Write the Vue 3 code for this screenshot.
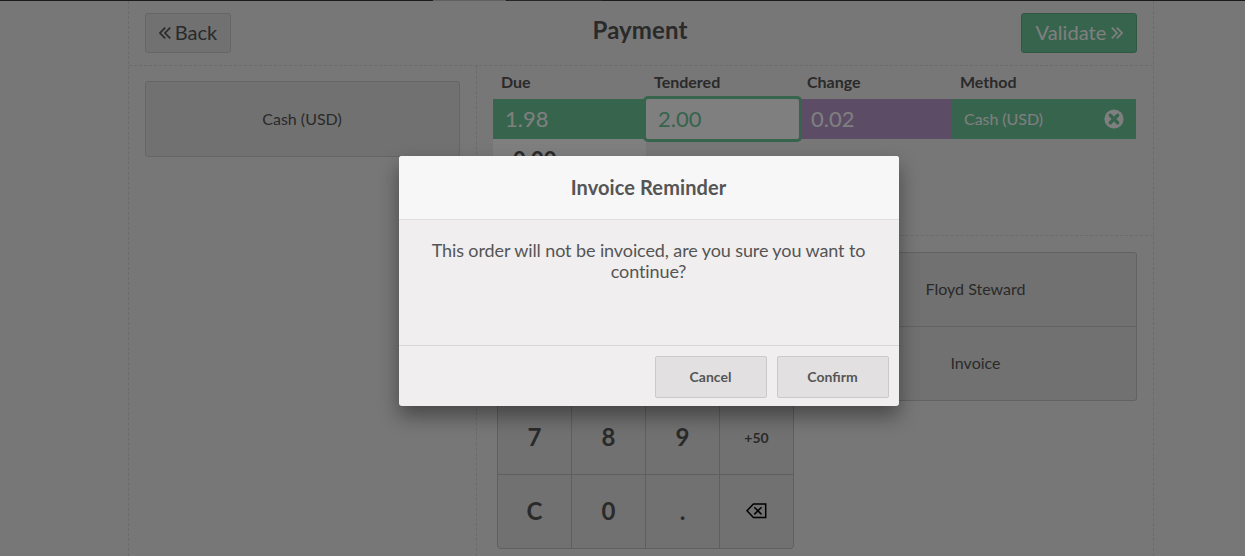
<script setup>
const keys = ['', '', '', '', '', '', '', '', '7', '8', '9', '+50', 'C', '0', '.', 'del']
</script>

<template>
  <div class="pos">
    <div class="topbar"><i class="tab"></i><i class="tab dim"></i></div>
    <div class="screen">
      <header class="head">
        <div class="btn back">
          <svg class="chev" width="12" height="14" viewBox="0 0 12 14"><path d="M6.2 1.6 1 7l5.2 5.4M11.2 1.6 6 7l5.2 5.4" /></svg>
          <span>Back</span>
        </div>
        <h1>Payment</h1>
        <div class="btn validate">
          <span>Validate</span>
          <svg class="chev" width="12" height="14" viewBox="0 0 12 14"><path d="M.8 1.6 6 7 .8 12.4M5.8 1.6 11 7l-5.2 5.4" /></svg>
        </div>
      </header>
      <div class="body">
        <aside class="left"><div class="method">Cash (USD)</div></aside>
        <main class="right">
          <section class="lines">
            <div class="row titles"><span>Due</span><span>Tendered</span><span>Change</span><span>Method</span></div>
            <div class="row line">
              <span class="cell due">1.98</span>
              <span class="cell edit">2.00</span>
              <span class="cell change">0.02</span>
              <span class="cell name">
                <span>Cash (USD)</span>
                <svg width="20" height="20" viewBox="0 0 20 20"><circle cx="10" cy="10" r="9.6" fill="#fff" /><path d="m6.3 6.3 7.4 7.4m0-7.4-7.4 7.4" stroke="#6ec89b" stroke-width="3.4" stroke-linecap="round" /></svg>
              </span>
            </div>
            <div class="row"><span class="due-next">0.00</span></div>
          </section>
          <section class="controls">
            <div class="pad">
              <div v-for="(k, i) in keys" :key="i" class="key" :class="{ mode: k.length > 1 }">
                <svg v-if="k === 'del'" width="21" height="16" viewBox="0 0 21 16"><path d="M7.4 1.1h12.3v13.3H7.4L1 7.75zM8.3 4.2l7.2 7.2m0-7.2-7.2 7.2" fill="none" stroke="#000" stroke-width="1.5" /></svg>
                <template v-else>{{ k }}</template>
              </div>
            </div>
            <div class="options"><div>Floyd Steward</div><div>Invoice</div></div>
          </section>
        </main>
      </div>
    </div>
    <div class="overlay">
      <div class="popup">
        <div class="title">Invoice Reminder</div>
        <p>This order will not be invoiced, are you sure you want to continue?</p>
        <footer><div class="action">Cancel</div><div class="action">Confirm</div></footer>
      </div>
    </div>
  </div>
</template>

<style>
body { overflow: hidden; }
</style>

<style scoped>
* { box-sizing: border-box; }
.pos {
  position: relative;
  width: 1245px;
  height: 556px;
  overflow: hidden;
  background: #f0eeee;
  color: #555;
  font: 16px Lato, "Liberation Sans", sans-serif;
}
.topbar { height: 1px; background: #38343c; display: flex; gap: 2px; padding-left: 433px; }
.tab { width: 73px; background: #c0c0c0; }
.tab.dim { width: 94px; background: #4c4c50; }
.screen {
  margin-left: 128px;
  width: 1026px;
  height: 555px;
  border: dashed #d7d7d7;
  border-width: 0 1px;
  display: flex;
  flex-direction: column;
}
.head {
  height: 65px;
  flex: none;
  border-bottom: 1px dashed #d7d7d7;
  display: grid;
  grid-template-columns: 1fr auto 1fr;
  align-items: start;
  padding: 12px 16px 0;
}
h1 { margin: 2px 0 0; padding-right: 2px; font-size: 24px; line-height: 29px; font-weight: 700; letter-spacing: 0.1px; }
.btn {
  height: 40px;
  display: flex;
  align-items: center;
  justify-content: center;
  font-size: 20px;
  border: 1px solid #cacaca;
  border-radius: 3px;
  background: #e2e2e2;
}
.btn span { padding-bottom: 2px; }
.back { width: 86px; gap: 4px; justify-self: start; }
.validate { width: 116px; gap: 4px; justify-self: end; background: #6ec89b; border-color: #5eaf85; color: #fff; }
.validate span { letter-spacing: 0.1px; }
.chev { fill: none; stroke: currentColor; stroke-width: 1.7; }
.body { flex: 1; display: flex; min-height: 0; }
.left { width: 348px; flex: none; padding: 15px 16px; border-right: 1px dashed #d7d7d7; }
.method {
  height: 76px;
  padding: 0 1px 2px 0;
  border: 1px solid #cacaca;
  border-radius: 3px;
  background: #e2e2e2;
  display: flex;
  align-items: center;
  justify-content: center;
}
.right { flex: 1; }
.lines { height: 170px; padding: 0 16px; border-bottom: 1px dashed #d7d7d7; }
.row { display: grid; grid-template-columns: 153px 153px 153px 184px; }
.titles { height: 33px; line-height: 31px; font-weight: 700; }
.titles span { padding-left: 8px; }
.line { height: 40px; color: #fff; font-size: 22px; line-height: 40px; }
.cell { padding-left: 12px; background: #6ec89b; }
.edit { position: relative; background: #fff; color: #6ec89b; border-radius: 2px; box-shadow: 0 0 0 3px #6ec89b; }
.change { background: #b899ca; }
.name { display: flex; align-items: center; justify-content: space-between; padding-right: 12px; font-size: 16px; letter-spacing: -0.05px; }
.due-next { background: #fff; height: 48px; padding-left: 20px; font-size: 22px; font-weight: 700; line-height: 42px; }
.controls { display: flex; padding: 16px 16px 0 20px; gap: 20px; }
.pad {
  width: 297px;
  height: 297px;
  flex: none;
  display: grid;
  grid-template: repeat(4, 73px) / repeat(4, 73px);
  gap: 1px;
  background: #bfbfbf;
  border: 1px solid #bfbfbf;
  border-radius: 4px;
  overflow: hidden;
}
.key { background: #e2e2e2; display: flex; align-items: center; justify-content: center; padding-bottom: 2px; font-size: 24px; font-weight: 700; }
.mode { font-size: 14px; padding-bottom: 1px; }
.mode:last-child { padding: 0 1px 2px 0; }
.options { flex: 1; height: 149px; display: grid; grid-template-rows: 73px 73px; gap: 1px; background: #c4c4c4; border: 1px solid #c4c4c4; border-radius: 3px; overflow: hidden; }
.options div { background: #e2e2e2; display: flex; align-items: center; justify-content: center; padding-bottom: 2px; }
.overlay { position: absolute; inset: 0; background: rgba(0, 0, 0, .5); padding: 156px 0 0 399px; }
.popup {
  width: 500px;
  height: 250px;
  border-radius: 3px;
  overflow: hidden;
  background: #f0eeee;
  box-shadow: 0 10px 20px rgba(0, 0, 0, .4);
  display: flex;
  flex-direction: column;
  text-align: center;
}
.title { height: 64px; padding-right: 1px; line-height: 63px; font-size: 20px; font-weight: 700; letter-spacing: 0.1px; background: #f7f7f7; border-bottom: 1px solid #e0dfdf; }
p { flex: 1; margin: 0; padding: 20px 17px 20px 16px; font-size: 18px; line-height: 21px; letter-spacing: -0.1px; }
footer { height: 61px; padding: 10px; border-top: 1px solid #d8d7d7; display: flex; justify-content: flex-end; gap: 10px; }
.action { width: 112px; height: 42px; line-height: 40px; padding-right: 1px; border: 1px solid #cacaca; border-radius: 2px; background: #e2e0e1; font-size: 14px; font-weight: 700; }
</style>
